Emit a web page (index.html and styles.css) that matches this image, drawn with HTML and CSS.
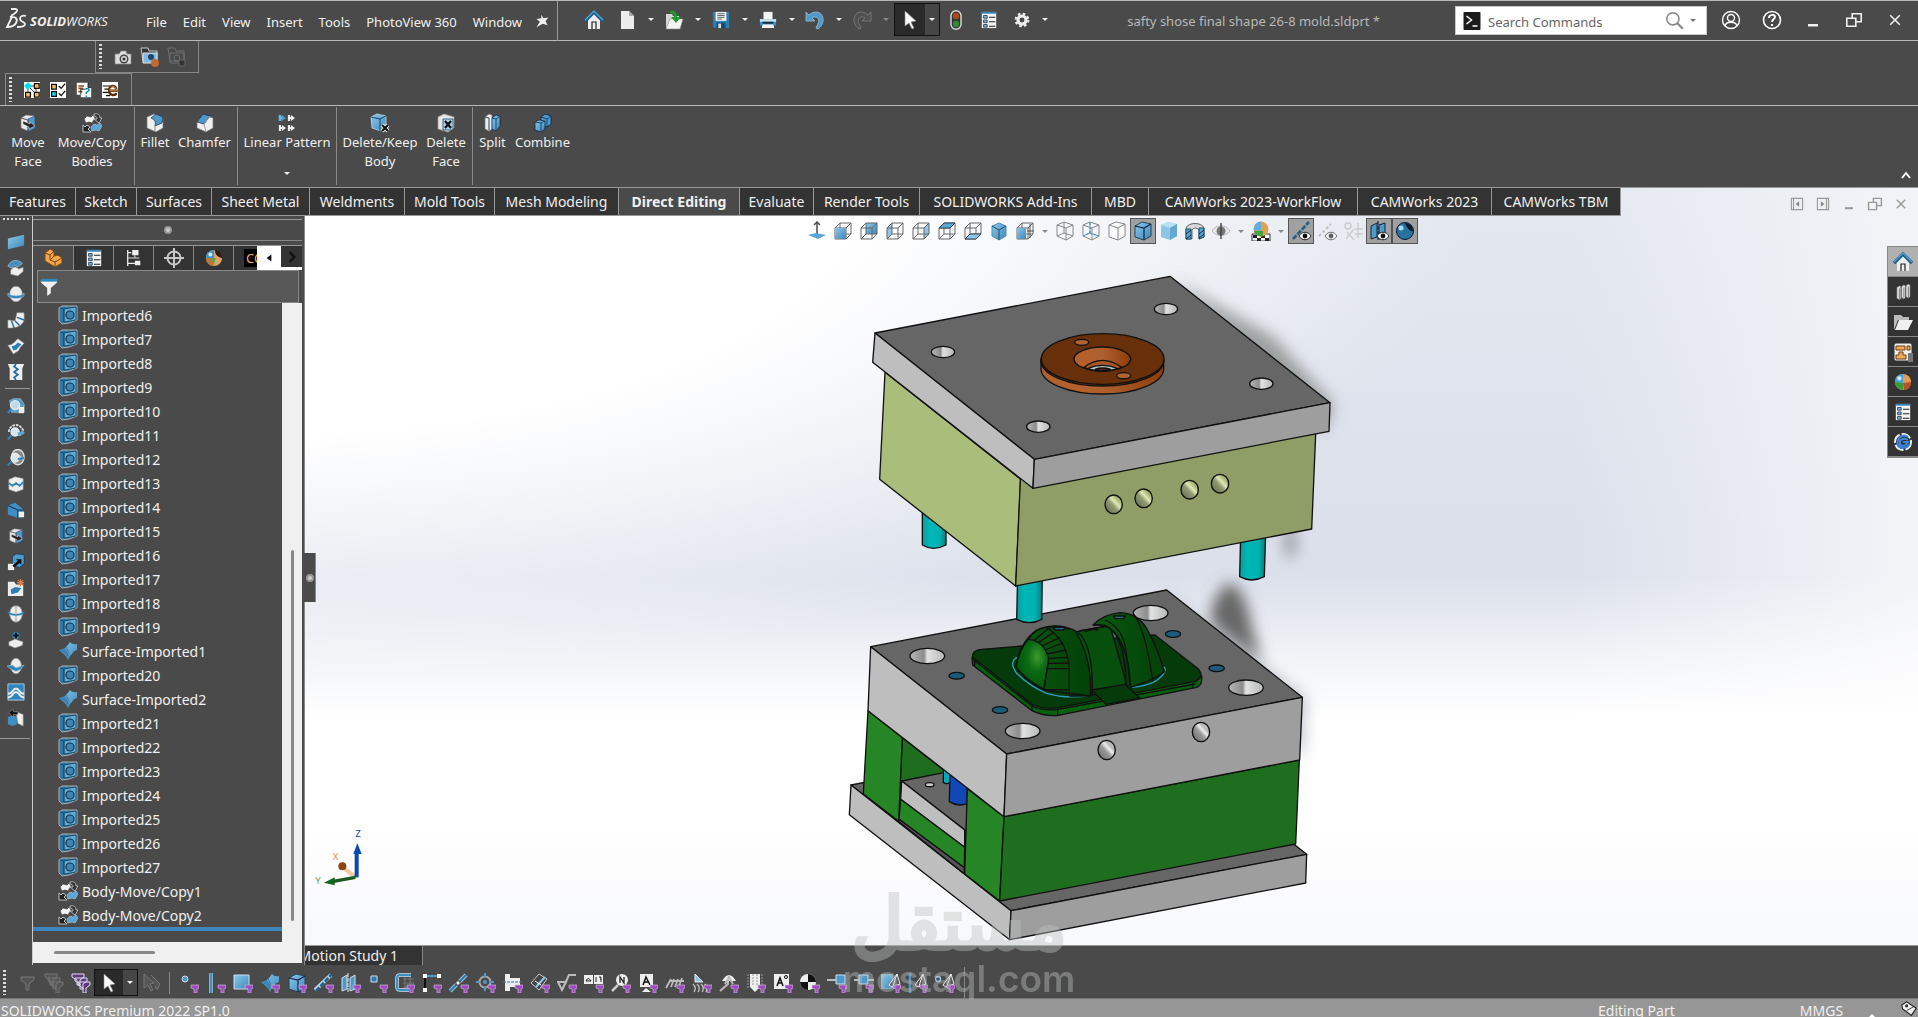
FILE: index.html
```html
<!DOCTYPE html>
<html lang="en">
<head>
    <meta charset="UTF-8">
    <meta name="viewport" content="width=device-width, initial-scale=1.0">
    <title>SOLIDWORKS Premium 2022</title>
    <link rel="stylesheet" href="styles.css">
</head>
<body>
    <svg class="defs" aria-hidden="true">
        <defs>
            <linearGradient id="blue" x1="0" y1="0" x2="1" y2="1"><stop offset="0" stop-color="#8cc9ec"/><stop offset="1" stop-color="#3f86b8"/></linearGradient>
            <linearGradient id="steel"><stop offset="0" stop-color="#b8b8b8"/><stop offset=".4" stop-color="#8c8c8c"/><stop offset=".5" stop-color="#e2e2e2"/><stop offset="1" stop-color="#b4b8b6"/></linearGradient>
            <linearGradient id="bore" x1="0" y1="1" x2="1" y2="0"><stop offset="0" stop-color="#666"/><stop offset=".45" stop-color="#999"/><stop offset=".6" stop-color="#eee"/><stop offset=".7" stop-color="#bbb"/></linearGradient>
            <linearGradient id="oliveBore" x1="0" y1="1" x2="1" y2="0"><stop offset="0" stop-color="#5b634c"/><stop offset=".45" stop-color="#8f9c72"/><stop offset=".6" stop-color="#dfe8b8"/><stop offset=".75" stop-color="#a9b878"/></linearGradient>
            <linearGradient id="pin"><stop offset="0" stop-color="#0a9a9a"/><stop offset=".3" stop-color="#00b8b8"/><stop offset=".75" stop-color="#00b0b0"/><stop offset="1" stop-color="#077"/></linearGradient>
            <linearGradient id="copper"><stop offset="0" stop-color="#b5602b"/><stop offset=".5" stop-color="#b06030"/><stop offset="1" stop-color="#8e3d08"/></linearGradient>
            <linearGradient id="arch"><stop offset="0" stop-color="#0a5a10"/><stop offset="1" stop-color="#024008"/></linearGradient>
            <radialGradient id="dome" cx=".65" cy=".35" r=".6"><stop offset="0" stop-color="#3e9a2c"/><stop offset=".5" stop-color="#0b6a14"/><stop offset="1" stop-color="#045a0c"/></radialGradient>
            <filter id="soft" x="-60%" y="-60%" width="220%" height="220%"><feGaussianBlur stdDeviation="22"/></filter>
        </defs>

        <symbol id="funnel" viewBox="0 0 20 20"><path d="M12 12h8v3l-2 1v4h-3v-4l-3-1z" fill="#a04cc0" stroke="#d9c6e2" stroke-width=".6"/></symbol>
        <symbol id="home" viewBox="0 0 20 20"><path d="M4 9v10h12V9l-6-6z" fill="#eee"/><path d="M8 19v-7h4v7" fill="none" stroke="#222" stroke-width="1.2"/><path d="M1 11l9-9 9 9" fill="none" stroke="#1c5c86" stroke-width="3.4"/><path d="M1 10l9-9 9 9" fill="none" stroke="#58a9d8" stroke-width="1.2"/></symbol>
        <symbol id="doc" viewBox="0 0 20 20"><path d="M4 1h8l5 5v13H4z" fill="#ececec"/><path d="M12 1v5h5z" fill="#aaa"/></symbol>
        <symbol id="open" viewBox="0 0 20 20"><path d="M2 4h6l1 2h6v12H2z" fill="#d8d8d8"/><path d="M2 19L6 9h13l-3 10z" fill="#f4f4f4" stroke="#888" stroke-width=".6"/><path d="M6 1c5-1 7 1 7 6h4l-5 6-5-6h3c0-3-1-4-4-4z" fill="#1f9a2c"/></symbol>
        <symbol id="save" viewBox="0 0 20 20"><path d="M1 1h18v18H3l-2-2z" fill="#2c7fb5"/><path d="M4 1h12v10H4z" fill="#f2f2f2"/><path d="M6 3h8M6 5h8M6 7h8M6 9h5" stroke="#555"/><path d="M5 13h10v6H5z" fill="#174c70"/><path d="M7 14h3v5H7z" fill="#ddd"/></symbol>
        <symbol id="print" viewBox="0 0 20 20"><path d="M5 1h10v9H5z" fill="#f4f4f4"/><path d="M1 9h18v7H1z" fill="#3c93c8"/><path d="M1 9h18v3H1z" fill="#c7dfed"/><path d="M4 12h12v2H4z" fill="#123"/><path d="M4 15h12l1 4H3z" fill="#f4f4f4"/></symbol>
        <symbol id="undo" viewBox="0 0 20 20"><path d="M1 2l3 3c7-6 15-2 14 6-1 5-3 7-6 8l-1-2c3-3 4-9 0-10-2 0-3 0-4 1l3 3H1z" fill="#4d9ac9" stroke="#a9cbe0" stroke-width=".7"/></symbol>
        <symbol id="redo" viewBox="0 0 20 20"><path d="M19 2l-3 3C9-1 1 3 2 11c1 5 3 7 6 8l1-2C6 14 5 8 9 7c2 0 3 0 4 1l-3 3h9z" fill="#505050" stroke="#7a7a7a" stroke-width=".9"/></symbol>
        <symbol id="cursor" viewBox="0 0 20 20"><path d="M5 1v15l4-3 3 6 2-1-3-6 5-1z" fill="#fff" stroke="#888" stroke-width=".6"/></symbol>
        <symbol id="traffic" viewBox="0 0 20 20"><rect x="5" y=".7" width="10" height="18.600" rx="5" fill="#333" stroke="#ddd" stroke-width="1.4"/><circle cx="10" cy="6" r="3.2" fill="#a8491b"/><circle cx="10" cy="14" r="3.2" fill="#2f8c34"/></symbol>
        <symbol id="props" viewBox="0 0 20 20"><path d="M2 1h16v18H2z" fill="#f4f4f4"/><path d="M2 1h16v2H2z" fill="#3182b8"/><path d="M4 5h4v3H4zM4 10h4v3H4zM4 15h4v3H4z" fill="#79b7dc" stroke="#123" stroke-width=".8"/><path d="M10 7h7M10 12h7M10 17h7" stroke="#222" stroke-width="1.2"/></symbol>
        <symbol id="gear" viewBox="0 0 20 20"><circle cx="10" cy="10" r="4.500" fill="none" stroke="#eee" stroke-width="3.500"/><circle cx="10" cy="10" r="7" fill="none" stroke="#eee" stroke-width="2.4" stroke-dasharray="2.8 2.7"/></symbol>
        <symbol id="pushpin" viewBox="0 0 20 20"><path d="M9 1l3 5 7-1-4 5 3 6-7-2-9 5 5-8-5-4 7-1z" fill="#f2f2f2"/></symbol>
        <symbol id="camera" viewBox="0 0 20 20"><path d="M2 7h4l2-3h5l1 3h4v10H2z" fill="#ddd" stroke="#888" stroke-width=".7"/><circle cx="11" cy="12" r="4.500" fill="#444"/><circle cx="11" cy="12" r="3" fill="#ddd"/><circle cx="11" cy="12" r="1.6" fill="#333"/></symbol>
        <symbol id="camera-rec" viewBox="0 0 20 20"><path d="M1 1h7l1 3h8v10H3z" fill="#333" stroke="#ccc"/><path d="M3 6h14v10H3z" fill="#7dbce0" stroke="#e5e5e5"/><circle cx="11" cy="10" r="3" fill="#246"/><circle cx="15" cy="16" r="4" fill="#c06a30"/></symbol>
        <symbol id="camera-off" viewBox="0 0 20 20"><path d="M1 1h7l1 3h8v10H3zM3 6h14v10H3z" fill="#484848" stroke="#707070"/><circle cx="10" cy="11" r="3" fill="none" stroke="#707070"/><path d="M12 13h6v6h-6z" fill="#333" stroke="#666"/></symbol>
        <symbol id="flow" viewBox="0 0 20 20"><path d="M0 0h20v20H0z" fill="#fff"/><path d="M5 5h10v10M5 5v10M5 5l10 10" fill="none" stroke="#222"/><path d="M5 0l5 5-5 5-5-5z" fill="#00e0f0"/><path d="M13 2h6v6h-6zM13 13h6v6h-6zM2 13h6v6H2z" fill="#f4b860" stroke="#111" stroke-width="1.500"/></symbol>
        <symbol id="checks" viewBox="0 0 20 20"><path d="M0 0h20v20H0z" fill="#fff"/><path d="M2 3h6v6H2z" fill="#f4b860" stroke="#111" stroke-width="1.500"/><path d="M2 12h6v6H2z" fill="#00e0f0" stroke="#111" stroke-width="1.500"/><path d="M11 5l3 3 5-6M11 14l3 3 5-6" fill="none" stroke="#111" stroke-width="1.600"/></symbol>
        <symbol id="help-doc" viewBox="0 0 20 20"><path d="M1 1h14v6h4v12H6v-3H1z" fill="#fff"/><path d="M3 5h7M3 8h6M3 12h5" stroke="#8a4a1c" stroke-width="2"/><path d="M15 1v6h4M6 16V9h6" stroke="#111" fill="none"/><path d="M12 9c3-2 5 0 4 2l-3 2v2M13 17v2" fill="none" stroke="#0792b0" stroke-width="2"/></symbol>
        <symbol id="e-fast" viewBox="0 0 20 20"><path d="M0 0h20v20H0z" fill="#fff"/><path d="M1 5h9M3 9h6M1 13h8M5 17h5" stroke="#111" stroke-width="1.5"/><path d="M9 11h9c0-8-9-8-9 0 0 7 8 6 9 3" fill="none" stroke="#5a2f0b" stroke-width="3"/><path d="M10 11h8c0-7-8-7-8 0" fill="none" stroke="#f2b25c" stroke-width="1"/></symbol>

        <symbol id="move-face" viewBox="0 0 20 20"><path d="M3 5l5-3 9 1v12l-7 3-7-3z" fill="#e8e8e8" stroke="#777" stroke-width=".6"/><path d="M10 6l7-3v12l-7 4z" fill="#4d9ac9" stroke="#226" stroke-width=".5"/><path d="M3 5l7 2v11" fill="none" stroke="#555"/><path d="M5 8l7 3V9l5 4-6 3v-2l-6-3z" fill="#222" stroke="#eee" stroke-width=".5"/></symbol>
        <symbol id="move-copy" viewBox="0 0 20 20"><path d="M2 6l3-3 4 1 2-2 2 3-3 5-3-1-3 1z" fill="#f2f2f2" stroke="#333" stroke-width=".6"/><path d="M12 1c4-1 6 1 6 4h2l-3 5-5-4h3c0-2-1-3-3-3z" fill="#333" stroke="#ccc" stroke-width=".8"/><path d="M9 14l3-3 3 1 3-2 2 3-3 5-3-1-4 1z" fill="#58a6d6" stroke="#bcd" stroke-width=".6"/><path d="M1 12v7h8l-3-3 2-2-3-2-2 2z" fill="#222" stroke="#ccc" stroke-width=".9"/></symbol>
        <symbol id="fillet" viewBox="0 0 20 20"><path d="M2 4l7-3 9 3v11l-7 4-9-4z" fill="#f0f0f0" stroke="#777" stroke-width=".7"/><path d="M6 5l5-4 7 3-1 6-7 3c1-4 0-6-4-8z" fill="#4d9ac9" stroke="#124" stroke-width=".7"/><path d="M10 12v7" stroke="#888"/></symbol>
        <symbol id="chamfer" viewBox="0 0 20 20"><path d="M2 9l6-7 10 3v10l-7 4-9-4z" fill="#f0f0f0" stroke="#777" stroke-width=".7"/><path d="M2 9l6-8 7 2-6 8z" fill="#4d9ac9" stroke="#124" stroke-width=".7"/><path d="M9 11l2 8M9 11l6-8" stroke="#999"/></symbol>
        <symbol id="pattern" viewBox="0 0 20 20"><path d="M3 2v6M3 5h2" stroke="#6fb6e0" stroke-width="2.600"/><path d="M5 2l4 3-4 3z" fill="#4d9ac9"/><path d="M3 12v6M3 15h2M12 2v6M12 5h2M12 12v6M12 15h2" stroke="#eee" stroke-width="2.200"/><path d="M5 12l4 3-4 3zM14 2l4 3-4 3zM14 12l4 3-4 3z" fill="#eee"/></symbol>
        <symbol id="delete-body" viewBox="0 0 20 20"><path d="M1 4l6-3 9 2v12l-5 3-9-3z" fill="url(#blue)" stroke="#cfe2ee" stroke-width=".7"/><path d="M1 4l9 2 6-3M10 6v12" fill="none" stroke="#154a6c"/><path d="M12 12l6 6M18 12l-6 6" stroke="#eee" stroke-width="4"/><path d="M12 12l6 6M18 12l-6 6" stroke="#111" stroke-width="2.2"/></symbol>
        <symbol id="delete-face" viewBox="0 0 20 20"><path d="M2 4l6-3 10 3v11l-6 4-10-3z" fill="#e6e6e6" stroke="#999" stroke-width=".7"/><path d="M7 6h10v11H7z" fill="#a9d4ec" stroke="#246" stroke-width=".8"/><path d="M9 8l6 7M15 8l-6 7" stroke="#111" stroke-width="2.2"/></symbol>
        <symbol id="split" viewBox="0 0 20 20"><path d="M2 4l4-3 3 1v14l-3 2-4-2z" fill="#eee" stroke="#777" stroke-width=".7"/><path d="M9 5l4-3 4 1v10l-4 5-4-2z" fill="url(#blue)" stroke="#124" stroke-width=".7"/><path d="M9 5l4 1 4-3M13 6v12M2 4l4 1v12" stroke="#154a6c" fill="none"/></symbol>
        <symbol id="combine" viewBox="0 0 20 20"><path d="M8 4l4-3 6 2v8l-4 3-6-2z" fill="#4d9ac9" stroke="#124" stroke-width=".8"/><path d="M2 9l4-2 6 1v8l-4 3-6-2z" fill="url(#blue)" stroke="#124" stroke-width=".8"/><path d="M2 9l6 1 4-2M8 10v9M8 4l6 2 4-3M14 6v8" stroke="#154a6c" fill="none"/></symbol>

        <symbol id="imported" viewBox="0 0 20 20"><path d="M1 3l3-2h15v14l-8 3-7 1-3-3z" fill="#2e78a6" stroke="#b0b0b0"/><path d="M6 4l12-2v13L6 17z" fill="#66abd6" stroke="#123c55" stroke-width=".8"/><circle cx="12" cy="10" r="4" fill="#3f86b4" stroke="#0e3650" stroke-width="1.2"/><path d="M2 3l4 1v13" stroke="#123c55" fill="none" stroke-width=".7"/></symbol>
        <symbol id="surface" viewBox="0 0 20 20"><path d="M1 9q4 1 7-3 2-2 4-5 2 3 7 2v6q-4 1-5 4-2 1-4 6-1-4-9-10z" fill="url(#blue)"/><path d="M1 9q5 2 9 10v-5q-1-5-3-7z" fill="#3a86b8"/><path d="M8 6q3 3 2 9" stroke="#2d74a4" fill="none"/></symbol>
        <symbol id="plane" viewBox="0 0 20 20"><path d="M1 6l18-4v12L1 18z" fill="url(#blue)"/></symbol>
        <symbol id="layers" viewBox="0 0 20 20"><path d="M1 8c3-8 12-8 16-3l-5 4c-3-2-5-2-7 1z" fill="#3f8fc4" stroke="#cde" stroke-width=".6"/><path d="M4 13c2-5 6-5 9-2l5-2v5l-6 5-8-2z" fill="#eee" stroke="#777" stroke-width=".7"/></symbol>
        <symbol id="ball" viewBox="0 0 20 20"><ellipse cx="10" cy="10" rx="7" ry="8.5" fill="#ececec" stroke="#999" stroke-width=".6"/><path d="M1 9c3 4 15 4 18 0v3c-3 4-15 4-18 0z" fill="#2f86bd" stroke="#bcd" stroke-width=".6"/></symbol>
        <symbol id="ball-line" viewBox="0 0 20 20"><path d="M10 1c5 0 6 3 7 8 0 6-3 10-7 10s-7-4-7-10c1-5 2-8 7-8z" fill="#ececec" stroke="#999"/><path d="M1 8c4 4 14 4 18 0" fill="none" stroke="#2f86bd" stroke-width="2"/><path d="M10 2v16" stroke="#999"/></symbol>
        <symbol id="ball-plate" viewBox="0 0 20 20"><ellipse cx="10" cy="10" rx="6" ry="8.500" fill="#ececec" stroke="#999" stroke-width=".6"/><path d="M0 10l6-1 4 3 9-3-4 5-5 2-5-2z" fill="#2f86bd" stroke="#bcd" stroke-width=".6"/></symbol>
        <symbol id="sweep" viewBox="0 0 20 20"><path d="M1 10l8 1c1-5 2-7 2-9h8v8c-2 6-7 9-18 9z" fill="#eee" stroke="#999" stroke-width=".6"/><path d="M9 11l5 5M11 7l8 3M5 11l3 8" stroke="#1f6f9f" stroke-width="1.6"/></symbol>
        <symbol id="patch" viewBox="0 0 20 20"><path d="M1 9c5 0 6-2 11-7l7 5c-3 3-5 5-6 8l-6 4z" fill="#f0f0f0" stroke="#999" stroke-width=".6"/><path d="M5 10c4 0 5-2 7-4l4 2c-2 3-4 3-5 6l-4 1z" fill="#2b7fb4"/></symbol>
        <symbol id="knit" viewBox="0 0 20 20"><path d="M1 1h18l-2 5v13H3V6z" fill="#eee"/><path d="M10 1l-2 3 4 3-4 3 4 3-4 3 2 3" fill="none" stroke="#1f6f9f" stroke-width="2"/></symbol>
        <symbol id="lens" viewBox="0 0 20 20"><path d="M3 4l4-2h8l4 6v9H5z" fill="#4d9ac9" stroke="#cde" stroke-width=".6"/><path d="M13 11h6v7h-6z" fill="#eee"/><circle cx="9" cy="9" r="5" fill="#bcdcee" stroke="#e8e8e8" stroke-width="1.5"/><path d="M5 13l-4 5" stroke="#2f86bd" stroke-width="2.4"/></symbol>
        <symbol id="lens-curve" viewBox="0 0 20 20"><path d="M2 10a8 8 0 0 1 13-6l3 4-3 5H8" fill="none" stroke="#ddd" stroke-width="2" stroke-dasharray="3 1"/><circle cx="9" cy="10" r="4.5" fill="#d8e6ee" stroke="#eee" stroke-width="1.5"/><path d="M5 14l-4 4" stroke="#2f86bd" stroke-width="2.4"/><path d="M12 12c3-1 4 1 7-2" stroke="#58a9d8" stroke-width="3" fill="none"/></symbol>
        <symbol id="lens-ball" viewBox="0 0 20 20"><ellipse cx="12" cy="9" rx="7" ry="8.500" fill="#888" stroke="#ddd" stroke-width="1.500"/><path d="M6 6c5-5 9 5 12 5" stroke="#ddd" fill="none" stroke-width="1.500"/><circle cx="9" cy="10" r="4.500" fill="#d8e6ee" stroke="#eee" stroke-width="1.500"/><path d="M5 14l-4 4M12 11l7-1" stroke="#2f86bd" stroke-width="2.200"/></symbol>
        <symbol id="white-cube" viewBox="0 0 20 20"><path d="M2 5l7-3 9 2v12l-8 3-8-3z" fill="#eee" stroke="#888" stroke-width=".6"/><path d="M2 9l4 3 4-3 4 3 4-4" fill="none" stroke="#2f86bd" stroke-width="2"/></symbol>
        <symbol id="wedge" viewBox="0 0 20 20"><path d="M1 5l8-3 10 8-1 8-6 1-11-4z" fill="#3f8fc4"/><path d="M1 5l11 5 7 0M12 10v9" stroke="#124" fill="none"/><path d="M13 12h6v6h-6z" fill="#eee"/></symbol>
        <symbol id="scale-body" viewBox="0 0 20 20"><path d="M6 4l4-3 9 1v10l-5 4-8-2z" fill="#4d9ac9" stroke="#124" stroke-width=".6"/><path d="M1 12h7v7H1z" fill="#eee"/><path d="M6 14l6-5-2-2h6v6l-2-2-6 5z" fill="#111"/></symbol>
        <symbol id="folder-surf" viewBox="0 0 20 20"><path d="M1 3h7l2 3h8v13H1z" fill="#eee"/><path d="M4 12l5-3 7 1-4 5-7 2z" fill="#2b7fb4"/><path d="M15 0v8M11 4h8M12 1l6 6M18 1l-6 6" stroke="#d9824a" stroke-width="1.2"/></symbol>
        <symbol id="draft" viewBox="0 0 20 20"><path d="M2 12l7-3 9 3-1 4-8 3-7-3z" fill="#eee" stroke="#777" stroke-width=".6"/><circle cx="10" cy="5" r="4" fill="#2f86bd"/><path d="M10 2v6M7 5h6" stroke="#111" stroke-width="2"/></symbol>
        <symbol id="tooling" viewBox="0 0 20 20"><path d="M1 1h18v18H1z" fill="#2f86bd" stroke="#bcd"/><path d="M1 12c6 0 5-6 9-6s3 6 9 6M1 16c6 0 5-6 9-6s3 6 9 6" fill="none" stroke="#eee" stroke-width="2.2"/></symbol>
        <symbol id="core" viewBox="0 0 20 20"><path d="M1 9l5-2 5 2v8l-5 2-5-2z" fill="#3f8fc4"/><path d="M10 3l8 3v13l-6-3z" fill="#eee" stroke="#888" stroke-width=".6"/><path d="M2 4l5-4v3h5v3H7v3z" fill="#111" stroke="#aaa" stroke-width=".5"/></symbol>

        <symbol id="part" viewBox="0 0 20 20"><path d="M2 5l5-4 4 2v5l4-1 4 3v5l-7 4-10-6z" fill="#f2a64a" stroke="#7a4611"/><path d="M2 5l5 2 4-4M7 7v5l5 2v5M12 14l7-4M7 12l4-4" stroke="#7a4611" fill="none"/></symbol>
        <symbol id="config" viewBox="0 0 20 20"><path d="M3 1v18M3 4h4M3 16h8" stroke="#eee" stroke-width="1.4" fill="none"/><path d="M8 1h7v6H8zM11 13h6v5h-6z" fill="#f0f0f0"/><path d="M3 10h8v-3M11 10h5" stroke="#eee" fill="none"/></symbol>
        <symbol id="target" viewBox="0 0 20 20"><circle cx="10" cy="10" r="6.500" fill="none" stroke="#c8c8c8" stroke-width="2"/><path d="M10 0v20M0 10h20" stroke="#c8c8c8" stroke-width="2"/></symbol>
        <symbol id="appearance" viewBox="0 0 20 20"><circle cx="10" cy="10" r="9" fill="#e39a52"/><path d="M10 1a9 9 0 0 0-9 9l9 2z" fill="#4aa0dc"/><path d="M1 10a9 9 0 0 0 9 9v-8z" fill="#3b9b3a"/><path d="M10 11l1 8c5 0 8-4 8-9z" fill="#b5522a"/><circle cx="6" cy="6" r="2.4" fill="#cdeafa"/></symbol>
        <symbol id="appearance-dark" viewBox="0 0 20 20"><circle cx="10" cy="10" r="9" fill="#e0a468"/><path d="M10 1a9 9 0 0 0-9 9h9z" fill="#3d94d4"/><path d="M1 10a9 9 0 0 0 9 9l-2-9z" fill="#b8783f"/><path d="M11 1c5 0 8 4 8 9-5-1-8-4-8-9z" fill="#2a1c14"/><circle cx="6" cy="6" r="2.200" fill="#cdeafa"/><path d="M7 10l3 8 2-8z" fill="#59a83f"/></symbol>
        <symbol id="filter" viewBox="0 0 20 20"><path d="M1 2h18v3l-7 6v6l-4 3v-9L1 5z" fill="#f0f0f0"/><path d="M1 1h18v3H1z" fill="#2f86bd"/></symbol>

        <symbol id="wire" viewBox="0 0 20 20"><path d="M2 7l5-5h11v11l-5 5H2zM2 7h11v11M13 7l5-5M7 2v11h11M7 13l-5 5" fill="none" stroke="#666"/></symbol>
        <symbol id="wire-iso" viewBox="0 0 20 20"><path d="M2 4l7-3 9 3v11l-7 4-9-4zM2 4l9 3 7-3M11 7v12M9 1v11l-7 3M9 12l9 3" fill="none" stroke="#888"/></symbol>
        <symbol id="shade" viewBox="0 0 20 20"><path d="M2 5l7-4 9 2v12l-7 4-9-3z" fill="url(#blue)" stroke="#245"/><path d="M2 5l9 2 7-4M11 7v12" fill="none" stroke="#124" stroke-width="1.2"/></symbol>
        <symbol id="section" viewBox="0 0 20 20"><path d="M1 7c2-6 16-6 18 0v9l-5 2V9q-4-4-7 0v9H1z" fill="#d8d8d8" stroke="#444" stroke-width=".8"/><path d="M1 8h5v10H1zM14 7h5v9l-5 2z" fill="#5aa6d6" stroke="#156"/><path d="M1 13l5-4M1 18l5-4M14 13l5-4M14 17l5-4" stroke="#124"/></symbol>
        <symbol id="eye" viewBox="0 0 20 20"><path d="M1 10c4-7 14-7 18 0-4 6-14 6-18 0z" fill="#e8e8e8" stroke="#bbb"/><circle cx="10" cy="10" r="4.500" fill="#777"/><path d="M10 2v16" stroke="#444" stroke-width="1.400"/></symbol>
        <symbol id="eyelet" viewBox="0 0 20 20"><path d="M8 15c3-5 9-5 12 0-3 5-9 5-12 0z" fill="#fff" stroke="#222"/><circle cx="14" cy="15" r="2.4" fill="#111"/></symbol>
        <symbol id="scene" viewBox="0 0 20 20"><path d="M1 13h18v7H1z" fill="#fff" stroke="#333"/><path d="M2 14h4v3H2zM10 14h4v3h-4zM6 17h4v3H6zM14 17h4v3h-4z" fill="#222"/><circle cx="10" cy="8" r="7.5" fill="#e3a04e"/><path d="M10 .5a7.500 7.500 0 0 0-7 9h7z" fill="#5ab0e4"/><path d="M3 10h9v5c-4 1-8-1-9-5z" fill="#4aa040"/></symbol>
        <symbol id="axis" viewBox="0 0 20 20"><path d="M2 18L18 1" stroke="#1f5f8b" stroke-width="2.6" stroke-dasharray="5 1.500"/></symbol>
        <symbol id="sphere" viewBox="0 0 20 20"><circle cx="10" cy="10" r="8.500" fill="#2a72a0" stroke="#113" /><path d="M10 2c4 0 8 3 8 8-3 1-6-3-8-8z" fill="#0a1c28"/><circle cx="6" cy="7" r="2.500" fill="#a8dcf4"/></symbol>

        <symbol id="books" viewBox="0 0 20 20"><path d="M3 5l3-2 2 1v13l-2 2-3-2zM8 4l3-2 2 1v13l-2 2-3-2zM13 3l3-2 2 1v13l-2 2-3-2z" fill="#ddd" stroke="#444" stroke-width=".7"/><path d="M6 6v12M11 5v12M16 4v12" stroke="#777"/></symbol>
        <symbol id="folder" viewBox="0 0 20 20"><path d="M1 3h7l2 2h6v3H5L1 18z" fill="#bbb"/><path d="M2 18L6 8h14l-5 10z" fill="#f0f0f0"/></symbol>
        <symbol id="palette" viewBox="0 0 20 20"><rect x="1" y="1" width="18" height="18" rx="2" fill="#eee" stroke="#333"/><path d="M3 4h9v4H3zM14 4h3v4h-3zM6 10h4v3h3v4H3v-4h3z" fill="#f3aa58" stroke="#6b3d0d"/><path d="M15 11h5v9h-5z" fill="#777"/></symbol>
        <symbol id="forum" viewBox="0 0 20 20"><circle cx="10" cy="10" r="8" fill="none" stroke="#eee" stroke-width="2" stroke-dasharray="10 2"/><path d="M15 5C9 1 3 7 5 13c3 5 9 3 12-1M15 8c-5-3-9 0-8 4 2 3 6 2 8-2h-5" fill="none" stroke="#3c86e6" stroke-width="2"/></symbol>
        <symbol id="funnels" viewBox="0 0 20 20"><path d="M1 1h12v3L9 7v5H6V7L1 4zM4 5h12v3l-4 3v5H9v-5L4 8zM7 9h12v3l-4 3v5h-3v-5l-5-3z"/></symbol>
        <symbol id="gray-funnel" viewBox="0 0 20 20"><path d="M4 4h13v3l-5 4v6H9v-6L4 7z" fill="#555" stroke="#777"/></symbol>
        <symbol id="doc-left" viewBox="0 0 20 20"><path d="M2 2h16v16H2zM5 2v16" fill="none" stroke="#999" stroke-width="1.600"/><path d="M13 6v8l-5-4z" fill="#888"/></symbol>
        <symbol id="restore" viewBox="0 0 20 20"><path d="M2 8h10v9H2zM8 8V3h10v9h-6" fill="none" stroke="currentColor" stroke-width="1.800"/></symbol>
        <symbol id="minimise" viewBox="0 0 20 20"><path d="M5 14h10v2.500H5z" fill="currentColor"/></symbol>
        <symbol id="close" viewBox="0 0 20 20"><path d="M4 4l12 12M16 4L4 16" stroke="currentColor" stroke-width="2"/></symbol>
    </svg>

    <header class="titlebar">
        <div class="brand">
            <svg class="ds" viewBox="0 0 22 22"><path d="M6 1h5c3 1 0 4-5 7M5 9c6-1 8 2 6 6s-6 4-9 4l5-10M21 8c-3-1-6 0-6 3s5 3 5 5-4 3-8 3" fill="none" stroke="#f2f2f2" stroke-width="1.800"/></svg>
            <span class="brand-name"><b>SOLID</b>WORKS</span>
        </div>
        <nav class="menu">
            <button>File</button><button>Edit</button><button>View</button><button>Insert</button><button>Tools</button><button>PhotoView 360</button><button>Window</button>
        </nav>
        <button class="pin" aria-label="Pin menu"><svg class="i14"><use href="#pushpin"/></svg></button>
        <div class="quick">
            <button class="home" aria-label="Home"><svg><use href="#home"/></svg></button>
            <button aria-label="New"><svg><use href="#doc"/></svg></button><button class="drop" aria-label="New options"></button>
            <button aria-label="Open"><svg><use href="#open"/></svg></button><button class="drop" aria-label="Open options"></button>
            <button aria-label="Save"><svg class="i18"><use href="#save"/></svg></button><button class="drop" aria-label="Save options"></button>
            <button aria-label="Print"><svg class="i18"><use href="#print"/></svg></button><button class="drop" aria-label="Print options"></button>
            <button aria-label="Undo"><svg><use href="#undo"/></svg></button><button class="drop" aria-label="Undo options"></button>
            <button aria-label="Redo"><svg><use href="#redo"/></svg></button><button class="drop dim" aria-label="Redo options"></button>
            <div class="select-tool"><button aria-label="Select"><svg><use href="#cursor"/></svg></button><button class="drop" aria-label="Select options"></button></div>
            <button class="wide" aria-label="Rebuild"><svg><use href="#traffic"/></svg></button>
            <button class="wide" aria-label="File properties"><svg class="i18"><use href="#props"/></svg></button>
            <button class="wide" aria-label="Options"><svg class="i18"><use href="#gear"/></svg></button><button class="drop narrow" aria-label="More options"></button>
        </div>
        <span class="doc-name">safty shose final shape 26-8 mold.sldprt *</span>
        <div class="search">
            <svg class="prompt" viewBox="0 0 17 18"><rect width="17" height="18" rx="1" fill="#1c1c1c"/><path d="M3 4l5 4-5 4M9 14h5" fill="none" stroke="#fff" stroke-width="1.500"/></svg>
            <input type="text" placeholder="Search Commands" aria-label="Search Commands">
            <svg class="glass" viewBox="0 0 18 18"><circle cx="8" cy="7" r="5.500" fill="none" stroke="#888" stroke-width="1.400"/><path d="M12 11l5 5" stroke="#888" stroke-width="2"/></svg>
            <button class="drop" aria-label="Search options"></button>
        </div>
        <div class="window-buttons">
            <button aria-label="Account"><svg viewBox="0 0 20 20" fill="none" stroke="#fff" stroke-width="1.400"><circle cx="10" cy="10" r="8.500"/><circle cx="10" cy="8" r="3.500"/><path d="M4 16c1-5 11-5 12 0"/></svg></button>
            <button aria-label="Help"><svg viewBox="0 0 20 20" fill="none" stroke="#fff" stroke-width="1.600"><circle cx="10" cy="10" r="8.500"/><path d="M7 8c0-4 6-4 6-1 0 2-3 2-3 5M10 14v2" stroke-width="2"/></svg></button>
            <button aria-label="Minimize"><svg><use href="#minimise"/></svg></button>
            <button aria-label="Restore"><svg class="i18"><use href="#restore"/></svg></button>
            <button aria-label="Close"><svg class="i16"><use href="#close"/></svg></button>
        </div>
    </header>

    <div class="docked">
        <div class="strip capture">
            <span class="grip"></span>
            <button aria-label="Capture"><svg><use href="#camera"/></svg></button><button aria-label="Record"><svg><use href="#camera-rec"/></svg></button><button aria-label="Stop"><svg><use href="#camera-off"/></svg></button>
        </div>
        <div class="strip tasks">
            <span class="grip"></span>
            <button aria-label="Workflow"><svg class="i16"><use href="#flow"/></svg></button><button aria-label="Checks"><svg class="i16"><use href="#checks"/></svg></button><button aria-label="Report"><svg class="i16"><use href="#help-doc"/></svg></button><button aria-label="Express"><svg class="i16"><use href="#e-fast"/></svg></button>
        </div>
    </div>

    <div class="ribbon">
        <div class="group g-move">
            <button><svg><use href="#move-face"/></svg>Move<br>Face</button>
            <button><svg><use href="#move-copy"/></svg>Move/Copy<br>Bodies</button>
        </div>
        <div class="group g-edge">
            <button><svg><use href="#fillet"/></svg>Fillet</button>
            <button><svg><use href="#chamfer"/></svg>Chamfer</button>
        </div>
        <div class="group g-pattern">
            <button><svg><use href="#pattern"/></svg>Linear Pattern<i class="caret"></i></button>
        </div>
        <div class="group g-delete">
            <button><svg><use href="#delete-body"/></svg>Delete/Keep<br>Body</button>
            <button><svg><use href="#delete-face"/></svg>Delete<br>Face</button>
        </div>
        <div class="group g-body">
            <button><svg><use href="#split"/></svg>Split</button>
            <button><svg><use href="#combine"/></svg>Combine</button>
        </div>
        <button class="collapse" aria-label="Collapse ribbon"><svg viewBox="0 0 10 10"><path d="M1 8l4-5 4 5" fill="none" stroke="#fff" stroke-width="2"/></svg></button>
    </div>

    <main class="work">
        <div class="tab-row">
            <nav class="tabs">
                <button>Features</button><button>Sketch</button><button>Surfaces</button><button>Sheet Metal</button><button>Weldments</button><button>Mold Tools</button><button>Mesh Modeling</button><button class="active">Direct Editing</button><button>Evaluate</button><button>Render Tools</button><button>SOLIDWORKS Add-Ins</button><button>MBD</button><button>CAMWorks 2023-WorkFlow</button><button>CAMWorks 2023</button><button>CAMWorks TBM</button>
            </nav>
            <div class="doc-buttons">
                <button aria-label="Previous pane"><svg class="i14"><use href="#doc-left"/></svg></button>
                <button aria-label="Next pane"><svg class="i14 flip"><use href="#doc-left"/></svg></button>
                <button aria-label="Minimize document"><svg class="i16"><use href="#minimise"/></svg></button>
                <button aria-label="Restore document"><svg class="i16"><use href="#restore"/></svg></button>
                <button aria-label="Close document"><svg class="i14"><use href="#close"/></svg></button>
            </div>
        </div>

        <div class="panes">
            <aside class="side-tools">
                <span class="grip-h"></span>
                <button aria-label="Plane"><svg><use href="#plane"/></svg></button>
                <button aria-label="Extend"><svg><use href="#layers"/></svg></button>
                <button aria-label="Revolve"><svg><use href="#ball"/></svg></button>
                <button aria-label="Sweep"><svg><use href="#sweep"/></svg></button>
                <button aria-label="Fill"><svg><use href="#patch"/></svg></button>
                <button aria-label="Knit"><svg><use href="#knit"/></svg></button>
                <hr>
                <button aria-label="Draft analysis"><svg><use href="#lens"/></svg></button>
                <button aria-label="Undercut analysis"><svg><use href="#lens-curve"/></svg></button>
                <button aria-label="Parting analysis"><svg><use href="#lens-ball"/></svg></button>
                <button aria-label="Split line"><svg><use href="#white-cube"/></svg></button>
                <button aria-label="Draft"><svg><use href="#wedge"/></svg></button>
                <button aria-label="Move face"><svg><use href="#move-face"/></svg></button>
                <button aria-label="Scale"><svg><use href="#scale-body"/></svg></button>
                <button aria-label="Insert mold folders"><svg><use href="#folder-surf"/></svg></button>
                <button aria-label="Parting lines"><svg><use href="#ball-line"/></svg></button>
                <button aria-label="Shut-off surfaces"><svg><use href="#draft"/></svg></button>
                <button aria-label="Parting surfaces"><svg><use href="#ball-plate"/></svg></button>
                <button aria-label="Tooling split"><svg><use href="#tooling"/></svg></button>
                <button aria-label="Core"><svg><use href="#core"/></svg></button>
                <hr class="full">
            </aside>

            <section class="manager">
                <div class="splitter"><i class="dot"></i></div>
                <div class="manager-tabs">
                    <button class="active" aria-label="Feature tree"><svg><use href="#part"/></svg></button>
                    <button aria-label="Properties"><svg class="i18"><use href="#props"/></svg></button>
                    <button aria-label="Configurations"><svg class="i18"><use href="#config"/></svg></button>
                    <button aria-label="Dimensions"><svg><use href="#target"/></svg></button>
                    <button aria-label="Appearances"><svg class="i18"><use href="#appearance-dark"/></svg></button>
                    <button class="cam"><span>CC</span></button>
                    <button class="prev" aria-label="Scroll left"><svg viewBox="0 0 10 10"><path d="M7 2v6L3 5z" fill="#111"/></svg></button>
                    <button class="next" aria-label="Scroll right"><svg viewBox="0 0 10 10"><path d="M3 1l4 4-4 4" fill="none" stroke="#111" stroke-width="2"/></svg></button>
                </div>
                <label class="tree-filter"><svg class="i18"><use href="#filter"/></svg><input type="text" aria-label="Filter tree"></label>
                <div class="tree-area">
                    <ul class="tree">
                        <li><svg><use href="#imported"/></svg>Imported6</li>
                        <li><svg><use href="#imported"/></svg>Imported7</li>
                        <li><svg><use href="#imported"/></svg>Imported8</li>
                        <li><svg><use href="#imported"/></svg>Imported9</li>
                        <li><svg><use href="#imported"/></svg>Imported10</li>
                        <li><svg><use href="#imported"/></svg>Imported11</li>
                        <li><svg><use href="#imported"/></svg>Imported12</li>
                        <li><svg><use href="#imported"/></svg>Imported13</li>
                        <li><svg><use href="#imported"/></svg>Imported14</li>
                        <li><svg><use href="#imported"/></svg>Imported15</li>
                        <li><svg><use href="#imported"/></svg>Imported16</li>
                        <li><svg><use href="#imported"/></svg>Imported17</li>
                        <li><svg><use href="#imported"/></svg>Imported18</li>
                        <li><svg><use href="#imported"/></svg>Imported19</li>
                        <li><svg><use href="#surface"/></svg>Surface-Imported1</li>
                        <li><svg><use href="#imported"/></svg>Imported20</li>
                        <li><svg><use href="#surface"/></svg>Surface-Imported2</li>
                        <li><svg><use href="#imported"/></svg>Imported21</li>
                        <li><svg><use href="#imported"/></svg>Imported22</li>
                        <li><svg><use href="#imported"/></svg>Imported23</li>
                        <li><svg><use href="#imported"/></svg>Imported24</li>
                        <li><svg><use href="#imported"/></svg>Imported25</li>
                        <li><svg><use href="#imported"/></svg>Imported26</li>
                        <li><svg><use href="#imported"/></svg>Imported27</li>
                        <li><svg><use href="#move-copy"/></svg>Body-Move/Copy1</li>
                        <li><svg><use href="#move-copy"/></svg>Body-Move/Copy2</li>
                        <li class="rollback"></li>
                    </ul>
                    <div class="vscroll"><i></i></div>
                </div>
                <div class="hscroll"><i></i></div>
                <div class="handle"><i class="dot"></i></div>
            </section>

            <section class="viewport">
                <svg class="scene" viewBox="305 216 1613 729">
                    <!-- ground shadows -->
                    <g transform="translate(830 570) scale(.333333)" filter="url(#soft)">
                        <path d="M1140 130Q1170 40 1205 40 1245 60 1262 160L1295 280 1150 170z" fill="#666"/>
                        <path d="M1000 60L1430 380 1420 560 1100 300z" fill="#c4c8cf"/>
                        <path d="M1366-130h30v90h-30z" fill="#8d9194"/>
                    </g>
                    <path transform="translate(860 260) scale(.333333)" filter="url(#soft)" d="M940 60L1240 230 1420 430 1395 520z" fill="#9a9e9e"/>

                    <!-- lower half -->
                    <g class="solid" transform="translate(830 570) scale(.333333)">
                        <path d="M63 645L950 475 1430 853 543 1022z" fill="#666"/>
                        <path d="M63 645L543 1022 539 1109 58 734z" fill="#bebebe"/>
                        <path d="M543 1022L1430 853 1427 939 539 1109z" fill="#9e9e9e"/>
                        <path d="M217 503L412 656 404 910 205 752z" fill="#1f6e20"/>
                        <path d="M215 633L345 607 412 655 412 785z" fill="#666"/>
                        <ellipse cx="299" cy="644" rx="13" ry="6" fill="#ccc"/>
                        <path d="M340 600h20v38q-10 6-20 0z" fill="#00a8b8"/>
                        <path d="M360 610L412 650V700Q385 712 358 695z" fill="#1247b8"/>
                        <path d="M215 633L404 780V832L212 688z" fill="#bebebe"/>
                        <path d="M212 688L404 832 403 893 207 748z" fill="#268626"/>
                        <path d="M207 748L403 893V911L205 754z" fill="#555"/>
                        <path d="M114 422L217 503 206 754 100 672z" fill="#268626"/>
                        <path d="M412 656L522 740 509 993 404 912z" fill="#268626"/>
                        <path d="M522 740L1408 570 1397 822 509 993z" fill="#1f6e20"/>
                        <path d="M122 230L1010 60 1417 382 530 552z" fill="#666"/>
                        <path d="M122 230L530 552 522 740 114 422z" fill="#bebebe"/>
                        <path d="M530 552L1417 382 1409 570 522 740z" fill="#9e9e9e"/>
                        <g fill="url(#steel)">
                            <ellipse cx="292" cy="258" rx="52" ry="23"/><ellipse cx="962" cy="129" rx="52" ry="23"/>
                            <ellipse cx="1248" cy="353" rx="52" ry="23"/><ellipse cx="578" cy="483" rx="52" ry="23"/>
                        </g>
                        <g fill="#1b5b7c">
                            <ellipse cx="380" cy="317" rx="23" ry="10"/><ellipse cx="1029" cy="192" rx="23" ry="10"/>
                            <ellipse cx="1160" cy="295" rx="23" ry="10"/><ellipse cx="510" cy="420" rx="23" ry="10"/>
                        </g>
                        <g fill="url(#bore)">
                            <ellipse cx="830" cy="540" rx="26" ry="29"/><ellipse cx="1113" cy="486" rx="26" ry="29"/>
                        </g>
                        <!-- shoe core -->
                        <path d="M426 262L428 285 606 422Q640 440 685 436L1100 352Q1118 345 1115 318z" fill="#06600e"/>
                        <path d="M606 402V422M683 414V436M1088 340V354M434 268V288" fill="none"/>
                        <path d="M428 262Q426 240 455 238L575 228 975 195 1106 298Q1124 320 1096 334L685 413Q640 420 606 402z" fill="#053a0a"/>
                        <path d="M428 268L606 408Q640 424 685 418L1096 342" fill="none"/>
                        <path class="blue-edge" d="M562 262Q535 275 560 310 600 350 650 370 710 388 785 376M905 352Q990 345 1006 300 1005 292 1000 290"/>
                        <path d="M735 186L840 166 890 345 785 376z" fill="#064f0d"/>
                        <path d="M745 188Q790 225 787 375M750 182L835 168M765 186q20-12 40-6" fill="none"/>
                        <path d="M789 165Q820 133 870 128 930 130 958 190 985 240 1003 305 980 325 902 352 895 200 825 166z" fill="url(#arch)"/>
                        <path d="M789 165Q855 155 876 240 890 300 886 350M825 150Q885 175 890 260L902 352M912 133Q950 190 968 335" fill="none"/>
                        <path d="M558 290Q570 215 620 180 680 155 735 182 785 260 782 378L640 360Q575 325 558 290z" fill="url(#arch)"/>
                        <path d="M558 290Q570 235 595 208 640 210 656 265L642 358Q580 325 558 290z" fill="url(#dome)"/>
                        <path d="M595 208Q615 175 650 172 715 215 718 300L718 378M650 172Q690 165 720 178M656 265L642 358 718 360M655 265L714 262M655 280L717 279M652 296L718 296M650 252L708 240M645 240L700 218M636 228L690 202M625 218L672 186M612 211L655 176M718 378L782 378" fill="none"/>
                        <path d="M785 360L885 343 930 384 828 403z" fill="#053a0a"/>
                        <path d="M670 172h36l-6 8h-24zM850 138h36l-6 8h-24z" fill="#1b6f8c"/>
                    </g>

                    <!-- upper half -->
                    <g class="solid" transform="translate(860 260) scale(.333333)">
                        <path d="M187 750V855Q220 875 258 855V800z" fill="url(#pin)"/>
                        <path d="M473 940L470 1078Q508 1098 545 1078L547 940z" fill="url(#pin)"/>
                        <path d="M1142 820L1139 950Q1175 970 1213 950L1217 820z" fill="url(#pin)"/>
                        <path d="M75 337L482 658 467 978 59 658z" fill="#aabd7a"/>
                        <path d="M482 640L1368 500 1355 807 467 978z" fill="#8f9d67"/>
                        <path d="M45 219L930 49 1410 428 523 598z" fill="#666"/>
                        <path d="M45 219L523 598 519 685 38 307z" fill="#bebebe"/>
                        <path d="M523 598L1410 428 1407 514 519 685z" fill="#9e9e9e"/>
                        <g fill="url(#steel)">
                            <ellipse cx="249" cy="276" rx="35" ry="17"/><ellipse cx="918" cy="147" rx="35" ry="17"/>
                            <ellipse cx="1204" cy="371" rx="35" ry="17"/><ellipse cx="535" cy="500" rx="35" ry="17"/>
                        </g>
                        <g fill="url(#oliveBore)">
                            <ellipse cx="761" cy="733" rx="26" ry="28"/><ellipse cx="851" cy="715" rx="26" ry="28"/>
                            <ellipse cx="989" cy="689" rx="26" ry="28"/><ellipse cx="1080" cy="671" rx="26" ry="28"/>
                        </g>
                        <path d="M543 297V326A184 76 0 0 0 911 326V297z" fill="url(#copper)"/>
                        <ellipse cx="727" cy="302" rx="184" ry="76" fill="#67300b"/>
                        <ellipse cx="728" cy="297" rx="184" ry="76" fill="#67300b"/>
                        <ellipse cx="727" cy="297" rx="85" ry="36" fill="url(#copper)"/>
                        <path d="M672 322Q727 280 785 322 727 346 672 322z" fill="#a8552a"/>
                        <path d="M682 326Q727 306 774 326 727 340 682 326z" fill="#b8c4c0"/>
                        <path d="M705 328Q727 320 752 328 727 336 705 328z" fill="#522"/>
                        <ellipse cx="665" cy="247" rx="21" ry="9" fill="#b0622f"/>
                        <ellipse cx="791" cy="347" rx="21" ry="9" fill="#b0622f"/>
                    </g>

                    <!-- axis triad -->
                    <g class="triad" transform="translate(0 590) scale(.333333)">
                        <path d="M1018 825L1068 862" stroke="#eccb9c" stroke-width="12"/>
                        <circle cx="1027" cy="829" r="12" fill="#8b4513"/>
                        <path d="M1070 862V790" stroke="#0a46b4" stroke-width="12"/>
                        <path d="M1060 792L1072 760 1085 792z" fill="#0a46b4"/>
                        <path d="M1066 862L1000 874" stroke="#1b5a1b" stroke-width="10"/>
                        <path d="M972 878L1004 862V886z" fill="#0f6a18"/>
                        <text x="1066" y="741" fill="#0a46b4">Z</text>
                        <text x="998" y="809" fill="#cf9443">X</text>
                        <text x="946" y="883" fill="#7c9a5c">Y</text>
                    </g>
                </svg>

                <div class="hud">
                    <button aria-label="Normal to"><svg viewBox="0 0 20 20"><path d="M10 1v13M7 4l3-3 3 3" stroke="#555" stroke-width="1.600" fill="none"/><path d="M1 14l8-2 10 2-8 4z" fill="#5aa6d6"/></svg></button>
                    <button aria-label="Front"><svg viewBox="0 0 20 20"><use href="#wire"/><path d="M2 7h11v11H2z" fill="url(#blue)"/></svg></button>
                    <button aria-label="Back"><svg viewBox="0 0 20 20"><path d="M7 2h11v11H7z" fill="url(#blue)"/><use href="#wire"/></svg></button>
                    <button aria-label="Left"><svg viewBox="0 0 20 20"><path d="M2 7l5-5v11l-5 5z" fill="#8cc6ea"/><use href="#wire"/></svg></button>
                    <button aria-label="Right"><svg viewBox="0 0 20 20"><path d="M13 7l5-5v11l-5 5z" fill="#8cc6ea"/><use href="#wire"/></svg></button>
                    <button aria-label="Top"><svg viewBox="0 0 20 20"><use href="#wire"/><path d="M2 7l5-5h11l-5 5z" fill="#5aa6d6" stroke="#345"/></svg></button>
                    <button aria-label="Bottom"><svg viewBox="0 0 20 20"><use href="#wire"/><path d="M2 18l5-5h11l-5 5z" fill="#8cc6ea" stroke="#345"/></svg></button>
                    <button aria-label="Isometric"><svg viewBox="0 0 20 20"><path d="M3 5l7-3 7 3v10l-7 4-7-4z" fill="url(#blue)" stroke="#4a90b8"/><path d="M3 5l7 4 7-4M10 9v10" fill="none" stroke="#256"/></svg></button>
                    <button aria-label="View orientation"><svg viewBox="0 0 20 20"><use href="#wire"/><path d="M2 7h9v11H2z" fill="url(#blue)"/><path d="M15 3v14M12 10h7" stroke="#555"/></svg></button>
                    <button class="drop" aria-label="More views"></button>
                    <button aria-label="Wireframe"><svg><use href="#wire-iso"/></svg></button>
                    <button aria-label="Hidden lines visible"><svg viewBox="0 0 20 20"><use href="#wire-iso"/><path d="M9 2v10l-7 3M9 12l9 3" stroke="#4a9fd8" stroke-dasharray="2 2" stroke-width="1.500" fill="none"/></svg></button>
                    <button aria-label="Hidden lines removed"><svg viewBox="0 0 20 20"><path d="M2 4l7-3 9 2v12l-7 4-9-3zM2 4l9 3 7-4M11 7v12" fill="#fcfcfc" stroke="#888"/></svg></button>
                    <button class="on" aria-label="Shaded with edges"><svg><use href="#shade"/></svg></button>
                    <button aria-label="Shaded"><svg viewBox="0 0 20 20"><path d="M2 4l7-3 9 2v12l-7 4-9-3z" fill="#8cc6e6"/><path d="M2 4l7-3 9 2-7 4z" fill="#b6e2f4"/><path d="M11 7l7-4v12l-7 4z" fill="#62a8d2"/></svg></button>
                    <button aria-label="Section view"><svg><use href="#section"/></svg></button>
                    <button aria-label="Hide or show items"><svg><use href="#eye"/></svg></button>
                    <button class="drop" aria-label="More items"></button>
                    <button aria-label="Apply scene"><svg><use href="#scene"/></svg></button>
                    <button class="drop" aria-label="More scenes"></button>
                    <button class="on" aria-label="View axes"><svg viewBox="0 0 20 20"><use href="#axis"/><use href="#eyelet"/></svg></button>
                    <button aria-label="View temporary axes"><svg viewBox="0 0 20 20" opacity=".65"><path d="M2 15L14 3" stroke="#aaa" stroke-width="2" stroke-dasharray="3 2"/><use href="#eyelet"/></svg></button>
                    <button aria-label="View relations"><svg viewBox="0 0 20 20" fill="none" stroke="#ccc" stroke-width="1.400"><circle cx="5" cy="5" r="3"/><path d="M3 18l8-10M4 11l7 8M15 2v15M12 8h8M12 13h8"/></svg></button>
                    <button class="on" aria-label="View planes"><svg viewBox="0 0 20 20"><path d="M2 5l6-3v14l-6 2zM10 4l6-2v14l-6 2z" fill="#4d9ac9" stroke="#124"/><path d="M9 0v20" stroke="#111" stroke-dasharray="4 1"/><use href="#eyelet"/></svg></button>
                    <button class="on" aria-label="View appearance"><svg><use href="#sphere"/></svg></button>
                </div>

                <div class="task-pane">
                    <button class="light" aria-label="Resources"><svg><use href="#home"/></svg></button>
                    <button aria-label="Design library"><svg class="i18"><use href="#books"/></svg></button>
                    <button aria-label="File explorer"><svg><use href="#folder"/></svg></button>
                    <button aria-label="View palette"><svg><use href="#palette"/></svg></button>
                    <button aria-label="Appearances"><svg class="i18"><use href="#appearance"/></svg></button>
                    <button aria-label="Custom properties"><svg class="i18"><use href="#props"/></svg></button>
                    <button aria-label="Forum"><svg><use href="#forum"/></svg></button>
                </div>

                <div class="study-tabs"><button>Motion Study 1</button></div>
            </section>
        </div>
    </main>

    <div class="filters">
        <span class="grip"></span>
        <button aria-label="Filter"><svg><use href="#gray-funnel"/></svg></button>
        <button aria-label="Clear filters"><svg fill="#555" stroke="#777"><use href="#funnels"/></svg></button>
        <button aria-label="All filters"><svg fill="#5b3a82" stroke="#e6def0"><use href="#funnels"/></svg></button>
        <div class="select-tool"><button aria-label="Select"><svg><use href="#cursor"/></svg></button><button class="drop" aria-label="Select options"></button></div>
        <button aria-label="Select other"><svg viewBox="0 0 20 20" fill="#555" stroke="#777"><path d="M2 1v14l4-3 3 6 2-1-3-6 4-1zM9 2l9 9-3 6-2-4"/></svg></button>
        <span class="rule"></span>
        <button aria-label="Vertices"><svg viewBox="0 0 20 20"><circle cx="6" cy="6" r="3" fill="#4d9ac9" stroke="#cde"/><use href="#funnel"/></svg></button>
        <button aria-label="Edges"><svg viewBox="0 0 20 20"><path d="M5 0v20" stroke="#9fd0ee" stroke-width="3.500"/><path d="M5 0v20" stroke="#2a7ab0" stroke-width="1.500"/><use href="#funnel"/></svg></button>
        <button aria-label="Faces"><svg viewBox="0 0 20 20"><path d="M1 2h15v14H1z" fill="url(#blue)" stroke="#cde"/><use href="#funnel"/></svg></button>
        <button aria-label="Surface bodies"><svg viewBox="0 0 20 20"><use href="#surface"/><use href="#funnel"/></svg></button>
        <button aria-label="Solid bodies"><svg viewBox="0 0 20 20"><use href="#shade"/><use href="#funnel"/></svg></button>
        <button aria-label="Axes"><svg viewBox="0 0 20 20"><path d="M1 17L17 2" stroke="#b8d4e6" stroke-width="4"/><use href="#axis"/><use href="#funnel"/></svg></button>
        <button aria-label="Planes"><svg viewBox="0 0 20 20"><path d="M1 5l5-3v14l-5 2zM9 5l5-3v14l-5 2z" fill="#4d9ac9" stroke="#cde"/><path d="M7 0v20" stroke="#eee" stroke-dasharray="4 1"/><use href="#funnel"/></svg></button>
        <button aria-label="Sketch points"><svg viewBox="0 0 20 20"><path d="M3 3h6v6H3z" fill="#2a7ab0" stroke="#cde"/><use href="#funnel"/></svg></button>
        <button aria-label="Sketches"><svg viewBox="0 0 20 20"><path d="M8 6h11M8 10h11M8 14h11M10 3v16M15 3v16" stroke="#777"/><path d="M16 2H5Q2 2 2 5v9q0 3 3 3h9" fill="none" stroke="#cfe4f2" stroke-width="3.500"/><path d="M16 2H5Q2 2 2 5v9q0 3 3 3h9" fill="none" stroke="#3c8fc4" stroke-width="2"/><use href="#funnel"/></svg></button>
        <button aria-label="Sketch segments"><svg viewBox="0 0 20 20"><path d="M3 18V3h14" fill="none" stroke="#111" stroke-width="2"/><path d="M5 3h10" stroke="#4d9ac9" stroke-width="2"/><path d="M1 1h4v4H1zM15 1h4v4h-4zM1 15h4v4H1z" fill="#fff"/><use href="#funnel"/></svg></button>
        <button aria-label="Midpoints"><svg viewBox="0 0 20 20"><path d="M1 18L17 2" stroke="#9fc4dc" stroke-width="4"/><path d="M1 18L17 2" stroke="#2a7ab0" stroke-width="2"/><path d="M7 8h4v4H7z" fill="#fff" stroke="#333"/><use href="#funnel"/></svg></button>
        <button aria-label="Center marks"><svg viewBox="0 0 20 20"><circle cx="9" cy="9" r="5.500" fill="none" stroke="#aaa" stroke-width="2"/><circle cx="9" cy="9" r="2" fill="#4d9ac9"/><path d="M9 0v4M9 14v4M0 9h4M14 9h4" stroke="#4d9ac9" stroke-width="2"/><use href="#funnel"/></svg></button>
        <button aria-label="Centerlines"><svg viewBox="0 0 20 20"><path d="M2 1h5v17H2zM7 5h10v9H7z" fill="#eee"/><path d="M0 9h19" stroke="#2a7ab0" stroke-dasharray="3 1"/><use href="#funnel"/></svg></button>
        <button aria-label="Dimensions"><svg viewBox="0 0 20 20"><path d="M1 10l8-9 8 5-8 11z" fill="#444" stroke="#ccc"/><path d="M6 14l9-10" stroke="#8cc6ea" stroke-width="2"/><path d="M5 8l6 4" stroke="#fff"/><use href="#funnel"/></svg></button>
        <button aria-label="Surface finish"><svg viewBox="0 0 20 20"><path d="M1 9h8l-4 8zM5 17L12 2h7" fill="none" stroke="#bbb" stroke-width="2"/><use href="#funnel"/></svg></button>
        <button aria-label="Tolerances"><svg viewBox="0 0 20 20"><path d="M0 2h9v9H0zM10 2h9v9h-9z" fill="#eee"/><path d="M2 8q2-5 5 0zM12 4v5M15 4h2v5M16 6h1" fill="none" stroke="#222"/><use href="#funnel"/></svg></button>
        <button aria-label="Notes"><svg viewBox="0 0 20 20"><circle cx="11" cy="7" r="6" fill="#eee"/><path d="M7 12l-6 6" stroke="#ccc" stroke-width="2.500"/><path d="M9 10V4l4 6V4" fill="none" stroke="#222" stroke-width="1.300"/><use href="#funnel"/></svg></button>
        <button aria-label="Datums"><svg viewBox="0 0 20 20"><path d="M2 1h13v13H2zM4 19l4-4 5 4z" fill="#eee"/><path d="M5 12L8 4l4 8M6 9h5" fill="none" stroke="#111" stroke-width="1.500"/><use href="#funnel"/></svg></button>
        <button aria-label="Welds"><svg viewBox="0 0 20 20"><path d="M1 15L6 6M4 8h15M9 6l-3 8M13 6l-3 8M17 5l-3 8" stroke="#bbb" stroke-width="1.800"/><use href="#funnel"/></svg></button>
        <button aria-label="Weld beads"><svg viewBox="0 0 20 20"><path d="M3 1v8h8z" fill="#8cc6ea" stroke="#eee"/><path d="M1 11q4 4 1 8M5 11q4 4 1 8M9 11q4 4 1 8M13 11q3 3 1 8" fill="none" stroke="#bbb" stroke-width="1.400"/><use href="#funnel"/></svg></button>
        <button aria-label="Datum targets"><svg viewBox="0 0 20 20"><path d="M3 8q7-12 14 0z" fill="#eee"/><path d="M9 5v6l-8 7M6 11l4-7 4 7" stroke="#bbb" stroke-width="2" fill="none"/><use href="#funnel"/></svg></button>
        <button aria-label="Threads"><svg viewBox="0 0 20 20"><path d="M4 1h10v13l-5 5-5-5z" fill="#eee"/><path d="M2 1v14M16 1v12M7 1v12M11 1v12" stroke="#999" stroke-dasharray="2 1"/><use href="#funnel"/></svg></button>
        <button aria-label="Blocks"><svg viewBox="0 0 20 20"><path d="M1 1h15v15H1z" fill="#eee"/><path d="M4 13l3-8 3 8M5 10h4" fill="none" stroke="#111" stroke-width="1.500"/><circle cx="13" cy="4" r="1.500" fill="none" stroke="#111"/><use href="#funnel"/></svg></button>
        <button aria-label="Center of mass"><svg viewBox="0 0 20 20"><circle cx="8" cy="9" r="8" fill="#eee"/><path d="M8 9V1a8 8 0 0 1 8 8zM8 9v8a8 8 0 0 1-8-8z" fill="#111"/><use href="#funnel"/></svg></button>
        <button aria-label="Connection points"><svg viewBox="0 0 20 20"><path d="M0 7h10" stroke="#bbb" stroke-width="2"/><path d="M9 2h9v9H9z" fill="#4d9ac9" stroke="#cde"/><use href="#funnel"/></svg></button>
        <button aria-label="Routing points"><svg viewBox="0 0 20 20"><path d="M0 7h20" stroke="#bbb" stroke-width="2"/><path d="M5 2h9v9H5z" fill="#4d9ac9" stroke="#cde"/><use href="#funnel"/></svg></button>
        <button aria-label="Mesh facets"><svg viewBox="0 0 20 20"><path d="M0 1h12v15H0z" fill="url(#blue)"/><path d="M8 12l8-11 3 10-8 3zM16 1l-4 12" fill="#555" stroke="#eee"/><use href="#funnel"/></svg></button>
        <button aria-label="Facet edges"><svg viewBox="0 0 20 20"><path d="M2 0v20" stroke="#4d9ac9" stroke-width="2.500"/><path d="M7 12l8-11 3 10-8 3zM15 1l-4 12" fill="#555" stroke="#eee"/><use href="#funnel"/></svg></button>
        <button aria-label="Facet vertices"><svg viewBox="0 0 20 20"><circle cx="3" cy="6" r="2.500" fill="none" stroke="#8cc6ea" stroke-width="1.500"/><path d="M8 12l8-11 3 10-8 3zM16 1l-4 12" fill="#555" stroke="#eee"/><use href="#funnel"/></svg></button>
        <span class="rule end"></span>
    </div>

    <footer class="status">
        <span class="product">SOLIDWORKS Premium 2022 SP1.0</span>
        <span class="mode">Editing Part</span>
        <button class="units">MMGS</button>
        <i class="caret up"></i>
        <svg class="tag" viewBox="0 0 20 20"><path d="M1 5l6-4 12 8-6 9-11-8z" fill="#eee" stroke="#222" stroke-width="1.400"/><circle cx="7" cy="6" r="2" fill="#333"/><path d="M7 12l9-5" stroke="#222"/></svg>
    </footer>

    <div class="watermark">
        <span class="ar" lang="ar">مستقل</span>
        <span class="latin">mostaql.com</span>
    </div>
</body>
</html>
```
FILE: styles.css
```css
* {
    box-sizing: border-box;
}
body {
    margin: 0;
    height: 100vh;
    display: flex;
    flex-direction: column;
    overflow: hidden;
    position: relative;
    background: #4a4a4a;
    color: #f0f0f0;
    font-family: "Noto Sans", "Open Sans", sans-serif;
    font-size: 13px;
}
button {
    display: flex;
    align-items: center;
    justify-content: center;
    padding: 0;
    border: none;
    background: none;
    color: inherit;
    font: inherit;
    white-space: nowrap;
}
svg {
    width: 20px;
    height: 20px;
    flex: none;
    display: block;
}
.defs {
    position: absolute;
    width: 0;
    height: 0;
}
.i14 {
    width: 14px;
    height: 14px;
}
.i16 {
    width: 16px;
    height: 16px;
}
.i18 {
    width: 18px;
    height: 18px;
}
.flip {
    transform: scaleX(-1);
}
.grip {
    width: 3px;
    align-self: stretch;
    margin: 3px 0;
    background: repeating-linear-gradient(#ddd 0 2px, transparent 2px 4px);
}
.drop::after,
.caret {
    content: "";
    border: 3px solid transparent;
    border-top-color: #f0f0f0;
    border-bottom: none;
}
.caret.up {
    border: 3px solid transparent;
    border-bottom-color: #fff;
    border-top: none;
}

/* title bar */
.titlebar {
    height: 41px;
    display: flex;
    align-items: center;
    border-top: 1px solid #b5b9b8;
    border-bottom: 1px solid #b5b9b8;
}
.brand {
    width: 138px;
    padding: 0 0 3px 5px;
    display: flex;
    align-items: center;
    gap: 3px;
}
.ds {
    width: 22px;
    height: 22px;
}
.brand-name {
    font-family: "Open Sans", sans-serif;
    font-size: 13px;
    font-style: italic;
    padding-top: 3px;
}
.menu {
    display: flex;
}
.menu button {
    padding: 2px 8px 0;
}
.pin {
    width: 28px;
    height: 40px;
    border-right: 1px solid #999;
    padding-right: 4px;
}
.quick {
    display: flex;
    align-items: center;
    padding: 0 0 2px 24px;
}
.quick button {
    width: 24px;
    height: 32px;
}
.quick .home {
    margin-right: 9px;
}
.quick .drop {
    width: 23px;
}
.quick .dim::after {
    border-top-color: #888;
}
.quick .wide {
    width: 33px;
}
.quick .narrow {
    width: 14px;
}
.select-tool {
    display: flex;
    align-items: center;
    height: 33px;
    border: 1px solid #111;
    background: #2a2a2a;
}
.quick .select-tool {
    margin: 0 -1px 0 -3px;
}
.select-tool button,
.quick .select-tool button {
    width: 30px;
}
.select-tool .drop,
.quick .select-tool .drop {
    width: 14px;
    align-self: stretch;
    height: auto;
    background: #464646;
}
.doc-name {
    margin-left: auto;
    color: #b8b8b8;
    padding-top: 1px;
    margin-right: 75px;
}
.search {
    display: flex;
    align-items: center;
    width: 252px;
    height: 29px;
    padding: 0 4px 0 7px;
    background: #fff;
    border: 1px solid #c8c8c8;
}
.search .prompt {
    width: 18px;
    height: 18px;
}
.search input {
    flex: 1;
    min-width: 0;
    border: none;
    padding: 2px 0 0 7px;
    font: inherit;
    background: none;
}
.search input::placeholder {
    color: #666;
    opacity: 1;
}
.search .drop {
    width: 18px;
}
.search .drop::after {
    border-top-color: #777;
}
.window-buttons {
    display: flex;
    padding: 0 3px 2px 3px;
}
.window-buttons button {
    width: 41px;
    height: 36px;
}

/* floating toolbars docked under the title */
.docked {
    height: 65px;
    border-bottom: 1px solid #b5b9b8;
}
.strip {
    display: flex;
    align-items: center;
    height: 32px;
}
.strip button {
    width: 27px;
}
.capture {
    width: 104px;
    margin-left: 95px;
    padding-left: 3px;
    border: 1px solid #888;
    border-top: none;
}
.tasks {
    width: 127px;
    margin-left: 5px;
    padding-left: 3px;
    border: 1px solid #888;
    border-bottom: none;
}
.strip .grip {
    margin-right: 7px;
}
.tasks button {
    width: 26px;
}

/* ribbon */
.ribbon {
    height: 81px;
    display: flex;
    padding-top: 1px;
}
.group {
    display: grid;
    height: 78px;
    border-right: 1px solid #8a8a8a;
}
.group button {
    flex-direction: column;
    justify-content: flex-start;
    line-height: 19px;
    padding-top: 6px;
}
.group svg {
    width: 20px;
    height: 20px;
}
.g-move {
    width: 135px;
    grid-template-columns: 56px 72px;
}
.g-edge {
    width: 103px;
    grid-template-columns: 40px 59px;
}
.g-pattern {
    width: 99px;
}
.g-pattern .caret {
    margin-top: 20px;
}
.g-delete {
    width: 136px;
    grid-template-columns: 86px 46px;
}
.g-body {
    width: 105px;
    grid-template-columns: 39px 61px;
    border-right: none;
}
.collapse {
    margin: auto 7px 7px auto;
}
.collapse svg {
    width: 10px;
    height: 10px;
}

/* work area */
.work {
    flex: 1;
    min-height: 0;
    display: flex;
    flex-direction: column;
    background:
        linear-gradient(to bottom, transparent 50%, rgba(255, 255, 255, 0.6) 60%, #fff 68%, #fff 82%, #f6f7fa 100%),
        radial-gradient(ellipse 65% 64% at 12% 0, #fff 50%, transparent 100%),
        linear-gradient(to left, #f3f4f8 0, transparent 18%),
        linear-gradient(#e4e8f0, #dbe0eb 45%);
}
.tab-row {
    display: flex;
    justify-content: space-between;
    border-top: 1px solid #999;
    height: 29px;
    flex: none;
}
.tabs {
    display: grid;
    grid-template-columns: 76px 61px 75px 98px 95px 90px 124px 121px 74px 106px 172px 57px 209px 134px 129px;
    font-size: 14px;
    background: #333;
    border-bottom: 1px solid #999;
}
.tabs button {
    border-right: 1px solid #999;
}
.tabs .active {
    background: #4a4a4a;
    font-weight: bold;
}
.doc-buttons {
    display: flex;
    padding: 4px 4px 0 0;
    color: #999;
}
.doc-buttons button {
    width: 26px;
}
.panes {
    flex: 1;
    min-height: 0;
    display: flex;
}
.side-tools {
    width: 32px;
    background: #4a4a4a;
    padding-top: 2px;
}
.grip-h {
    display: block;
    height: 2px;
    margin: 0 2px 9px 3px;
    background: repeating-linear-gradient(to right, #ddd 0 2px, transparent 2px 4px);
}
.side-tools button {
    width: 32px;
    height: 26px;
}
.side-tools svg {
    width: 18px;
    height: 18px;
}
.side-tools hr {
    margin: 3px 2px 4px 5px;
    border: none;
    border-top: 1px solid #999;
}
.side-tools .full {
    margin: 7px 2px 0 0;
}

/* feature manager */
.manager {
    position: relative;
    width: 273px;
    display: flex;
    flex-direction: column;
    background: #4a4a4a;
    border-left: 1px solid #ccc;
    border-right: 1px solid #888;
    padding: 0 2px 2px 0;
}
.splitter {
    height: 22px;
    margin: 3px 0 4px;
    border-top: 1px solid #999;
    border-bottom: 1px solid #888;
    display: flex;
    align-items: center;
    justify-content: center;
}
.dot {
    width: 8px;
    height: 8px;
    border-radius: 50%;
    background: #ccc;
    border: 2px solid #999;
}
.manager-tabs {
    display: flex;
    height: 25px;
    border-top: 1px solid #999;
    background: #333;
}
.manager-tabs button {
    width: 40px;
    border-right: 1px solid #888;
}
.manager-tabs .active {
    width: 41px;
    background: #4a4a4a;
}
.manager-tabs .cam {
    width: 23px;
    padding: 1px 0 1px 10px;
    color: #f0b058;
    border: none;
    overflow: hidden;
    justify-content: flex-start;
}
.cam span {
    background: #000;
    padding-left: 2px;
}
.manager-tabs .prev {
    width: 24px;
    background: #fff;
    border: none;
}
.manager-tabs .next {
    flex: 1;
    border: none;
    border-bottom: 3px solid #fff;
}
.manager-tabs .prev svg,
.manager-tabs .next svg {
    width: 12px;
    height: 12px;
}
.tree-filter {
    display: flex;
    align-items: center;
    height: 33px;
    margin: 0 3px 0 4px;
    padding-left: 2px;
    border: 1px solid #888;
    background: #575757;
}
.tree-filter input {
    flex: 1;
    min-width: 0;
    border: none;
    background: none;
    color: inherit;
}
.tree-area {
    flex: 1;
    min-height: 0;
    display: flex;
}
.tree {
    flex: 1;
    margin: 0;
    padding: 0;
    list-style: none;
    font-size: 14px;
    overflow: hidden;
}
.tree li {
    display: flex;
    align-items: center;
    gap: 4px;
    height: 24px;
    padding-left: 25px;
}
.tree .rollback {
    height: 4px;
    background: #3d85bd;
}
.vscroll {
    width: 20px;
    background: #f0f0f0;
    padding: 247px 0 21px 9px;
}
.vscroll i {
    display: block;
    width: 3px;
    height: 100%;
    border-radius: 2px;
    background: #888;
}
.hscroll {
    height: 21px;
    background: #f0f0f0;
    padding: 9px 0 0 21px;
}
.hscroll i {
    display: block;
    width: 101px;
    height: 3px;
    border-radius: 2px;
    background: #888;
}
.handle {
    position: absolute;
    left: 100%;
    top: 337px;
    width: 12px;
    height: 49px;
    z-index: 1;
    display: flex;
    align-items: center;
    justify-content: center;
    background: #4a4a4a;
    border-right: 1px solid #888;
}

/* graphics area */
.viewport {
    position: relative;
    flex: 1;
    min-width: 0;
    display: flex;
    flex-direction: column;
}
.scene {
    width: 100%;
    height: auto;
    flex: 1;
    min-height: 0;
}
.solid {
    stroke: #111;
    stroke-width: 4;
    stroke-linejoin: round;
}
.blue-edge {
    fill: none;
    stroke: #2f9ec0;
}
.triad {
    font-family: "Noto Sans", sans-serif;
    font-size: 29px;
}
.hud {
    position: absolute;
    top: 2px;
    left: 0;
    right: 2px;
    display: flex;
    justify-content: center;
}
.hud button {
    width: 26px;
    height: 26px;
}
.hud .drop {
    width: 14px;
}
.hud .drop::after {
    border-top-color: #888;
}
.hud .on {
    background: #a0a0a0;
    border: 1px solid #555;
}
.task-pane {
    position: absolute;
    top: 30px;
    right: 0;
    border: 1px solid #888;
    border-right: none;
}
.task-pane button {
    width: 30px;
    height: 30px;
    background: #333;
    border-bottom: 1px solid #888;
}
.task-pane .light {
    background: #b0b0b0;
}
.study-tabs {
    height: 20px;
    background: #4a4a4a;
    border-top: 1px solid #999;
    font-size: 14px;
}
.study-tabs button {
    width: 118px;
    height: 19px;
    justify-content: flex-end;
    padding-right: 24px;
    overflow: hidden;
    background: #333;
    border-right: 1px solid #888;
}

/* selection filters */
.filters {
    height: 33px;
    display: flex;
    align-items: center;
    padding: 2px 0 0 3px;
}
.filters > button {
    width: 27px;
}
.filters .grip {
    margin-right: 7px;
}
.filters .select-tool {
    height: 27px;
}
.filters .select-tool button {
    width: 28px;
}
.filters .select-tool .drop {
    width: 14px;
}
.rule {
    width: 1px;
    height: 22px;
    margin: 0 5px 0 4px;
    background: #888;
}
.rule.end {
    height: 31px;
    margin: 0 6px;
}
.status {
    height: 19px;
    display: flex;
    padding: 0 1px;
    background: #969696;
    border-top: 1px solid #777;
    font-size: 14px;
    line-height: 23px;
    overflow: hidden;
}
.status .mode {
    margin-left: auto;
    width: 202px;
}
.status .units {
    width: 43px;
    align-items: flex-start;
}
.status .caret {
    margin: 10px 26px 0;
}
.status .tag {
    width: 16px;
    height: 16px;
    margin-top: 2px;
}

/* overlay mark */
.watermark {
    position: absolute;
    left: 0;
    right: 0;
    bottom: 20px;
    display: flex;
    flex-direction: column;
    align-items: center;
    pointer-events: none;
    color: #bec2c0;
    opacity: 0.42;
}
.ar {
    font-family: "DejaVu Sans", sans-serif;
    font-size: 72px;
    line-height: 72px;
    -webkit-text-stroke: 4px #bec2c0;
}
.latin {
    font-family: Inter, sans-serif;
    font-weight: 600;
    font-size: 37px;
    line-height: 37px;
}
```
